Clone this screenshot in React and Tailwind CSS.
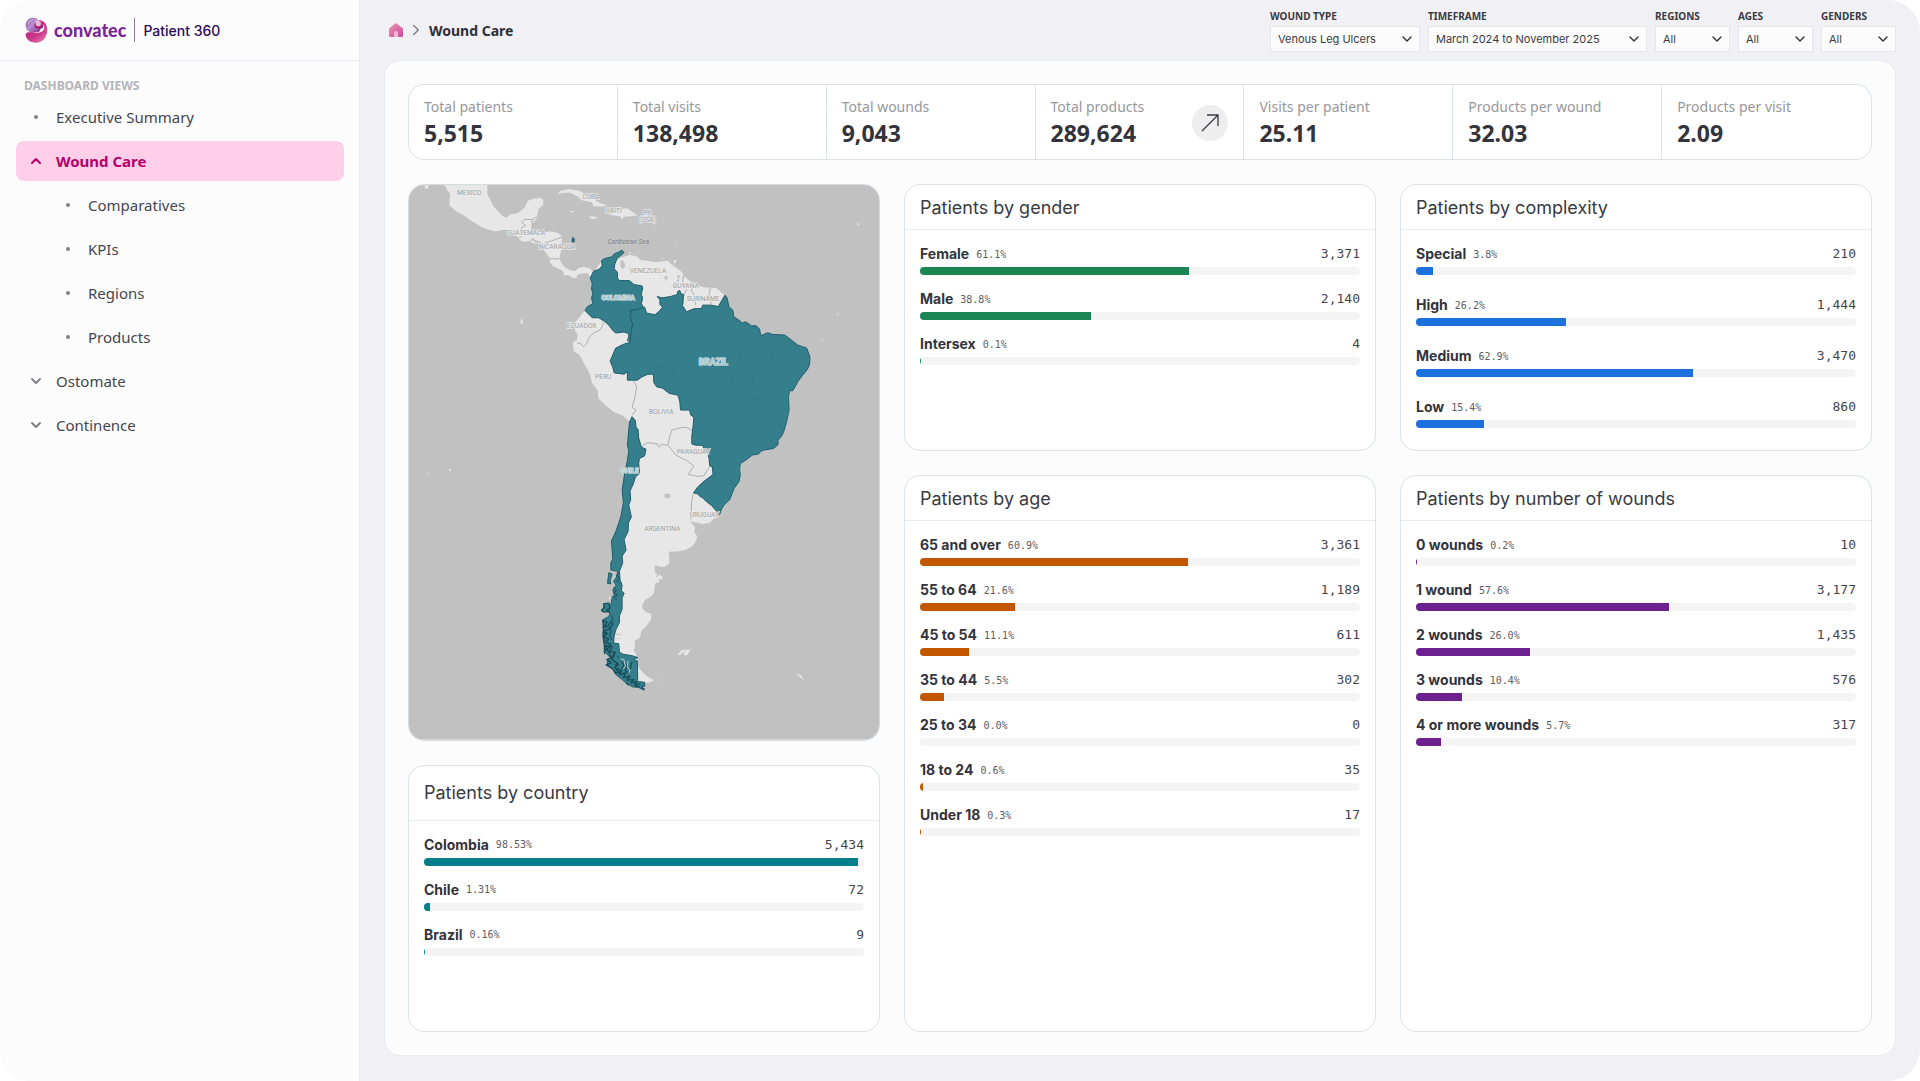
import React, { useState } from 'react';
import { ChevronDown, ChevronRight, ChevronUp } from 'lucide-react';

const navItems = [
  { label: 'Executive Summary', icon: 'dot' },
  { label: 'Wound Care', icon: 'up', active: true },
  { label: 'Comparatives', icon: 'dot', nested: true },
  { label: 'KPIs', icon: 'dot', nested: true },
  { label: 'Regions', icon: 'dot', nested: true },
  { label: 'Products', icon: 'dot', nested: true },
  { label: 'Ostomate', icon: 'down' },
  { label: 'Continence', icon: 'down' },
];

const filters = [
  { id: 'wound-type', label: 'WOUND TYPE', value: 'Venous Leg Ulcers', width: 'w-[150px]' },
  { id: 'timeframe', label: 'TIMEFRAME', value: 'March 2024 to November 2025', width: 'w-[219px]' },
  { id: 'regions', label: 'REGIONS', value: 'All', width: 'w-[75px]' },
  { id: 'ages', label: 'AGES', value: 'All', width: 'w-[75px]' },
  { id: 'genders', label: 'GENDERS', value: 'All', width: 'w-[75px]' },
];

const stats = [
  { label: 'Total patients', value: '5,515' },
  { label: 'Total visits', value: '138,498' },
  { label: 'Total wounds', value: '9,043' },
  { label: 'Total products', value: '289,624', link: true },
  { label: 'Visits per patient', value: '25.11' },
  { label: 'Products per wound', value: '32.03' },
  { label: 'Products per visit', value: '2.09' },
];

const byCountry = [
  { name: 'Colombia', percent: '98.53', count: 5434 },
  { name: 'Chile', percent: '1.31', count: 72 },
  { name: 'Brazil', percent: '0.16', count: 9 },
];

const byGender = [
  { name: 'Female', percent: '61.1', count: 3371 },
  { name: 'Male', percent: '38.8', count: 2140 },
  { name: 'Intersex', percent: '0.1', count: 4 },
];

const byComplexity = [
  { name: 'Special', percent: '3.8', count: 210 },
  { name: 'High', percent: '26.2', bar: '34', count: 1444 },
  { name: 'Medium', percent: '62.9', count: 3470 },
  { name: 'Low', percent: '15.4', count: 860 },
];

const byAge = [
  { name: '65 and over', percent: '60.9', count: 3361 },
  { name: '55 to 64', percent: '21.6', count: 1189 },
  { name: '45 to 54', percent: '11.1', count: 611 },
  { name: '35 to 44', percent: '5.5', count: 302 },
  { name: '25 to 34', percent: '0.0', count: 0 },
  { name: '18 to 24', percent: '0.6', count: 35 },
  { name: 'Under 18', percent: '0.3', count: 17 },
];

const byWounds = [
  { name: '0 wounds', percent: '0.2', count: 10 },
  { name: '1 wound', percent: '57.6', count: 3177 },
  { name: '2 wounds', percent: '26.0', count: 1435 },
  { name: '3 wounds', percent: '10.4', count: 576 },
  { name: '4 or more wounds', percent: '5.7', count: 317 },
];

const Logo = () => (
  <svg className="w-6 h-[26px]" viewBox="0 0 72 78" aria-hidden="true">
    <defs>
      <linearGradient id="logoTop" x1="0" y1="0" x2="1" y2="1">
        <stop offset="0" stopColor="#7d3fa0" />
        <stop offset="0.45" stopColor="#b890cf" />
        <stop offset="1" stopColor="#8a2a86" />
      </linearGradient>
      <linearGradient id="logoSide" x1="0" y1="0" x2="0.6" y2="1">
        <stop offset="0" stopColor="#d779b8" />
        <stop offset="0.5" stopColor="#c0287f" />
        <stop offset="1" stopColor="#dd6aa8" />
      </linearGradient>
      <linearGradient id="logoBase" x1="0" y1="0" x2="1" y2="1">
        <stop offset="0" stopColor="#b3237f" />
        <stop offset="0.55" stopColor="#cf3e8c" />
        <stop offset="1" stopColor="#e58ab8" />
      </linearGradient>
    </defs>
    <path d="M5 26C5 12 15 2 28 2c8 0 13 3 14 9-7 0-11 4-11 10 0 8 7 12 16 12 6 8-2 14-14 13C16 48 5 40 5 26Z" fill="url(#logoTop)" />
    <path d="M47 9c13 2 23 14 23 30 0 12-6 22-16 26-18 0-38-4-49-10 4-9 14-10 26-8 16 2 30-3 30-16 0-6-4-10-8-9-3 6-13 7-17 2 1-6 4-13 11-15Z" fill="url(#logoSide)" />
    <path d="M5 50c8-8 20-2 33-2 11 0 21-2 27-12 8 22-6 41-29 41C18 77 4 67 5 50Z" fill="url(#logoBase)" />
    <path d="M36 14c6 4 9 8 16 7 5 0 8 6 4 11-5 6-17 5-23-1-4-5-3-13 3-17Z" fill="#a3207a" />
    <circle cx="43" cy="20" r="8" fill="#e9b9da" />
    <path d="M10 16C17 5 28 3 35 7 25 9 18 14 13 25Z" fill="#d9c3e6" opacity=".6" />
  </svg>
);

const HomeIcon = () => (
  <svg className="w-[14px] h-[14px]" viewBox="0 0 42 42" aria-hidden="true">
    <defs>
      <linearGradient id="home" x1="0" y1="0" x2="1" y2="1">
        <stop offset="0" stopColor="#ee8fb2" />
        <stop offset="1" stopColor="#c94f97" />
      </linearGradient>
    </defs>
    <path d="M18 2q3-3 6 0l15 12q3 2 3 6v19q0 3-3 3H3q-3 0-3-3V20q0-4 3-6Z" fill="url(#home)" />
    <path d="M15 28q0-3 3-3h6q3 0 3 3v14H15Z" fill="#f3b5d3" />
  </svg>
);

const mapLabels = [
  { text: 'MEXICO', x: -215, y: 42 },
  { text: 'CUBA', x: 152, y: 54 },
  { text: 'HAITI', x: 220, y: 96 },
  { text: 'PR', x: 322, y: 102 },
  { text: '(USA)', x: 322, y: 124 },
  { text: 'GUATEMALA', x: -44, y: 162 },
  { text: 'NICARAGUA', x: 49, y: 206 },
  { text: 'VENEZUELA', x: 324, y: 278 },
  { text: 'GUYANA', x: 438, y: 322 },
  { text: 'SURINAME', x: 490, y: 362 },
  { text: 'ECUADOR', x: 124, y: 444 },
  { text: 'PERU', x: 189, y: 596 },
  { text: 'BOLIVIA', x: 364, y: 703 },
  { text: 'PARAGUAY', x: 461, y: 823 },
  { text: 'URUGUAY', x: 494, y: 1012 },
  { text: 'ARGENTINA', x: 367, y: 1055 },
];

const PatientMap = () => (
  <svg className="block w-full" viewBox="-396 12 1416 1671" role="img" aria-label="Patients by country map">
    <rect x="-396" y="12" width="1416" height="1671" fill="#c1c1c1" />

    {/* Land without patients */}
    <g fill="#e7e7e7">
      <path d="M-290 12-272 40-275 72-255 90-232 103-215 115-180 137-158 146-135 152-110 147-88 150-72 163-65 178-50 183-35 181-20 188-8 190 10 196 10 207 20 222 31 234 28 245 37 256 50 262 68 272 72 284 84 283 98 292 109 292 112 282 130 278 142 278 150 291 158 284 158 272 148 263 130 258 115 262 104 272 88 268 72 258 62 244 57 232 62 210 63 188 66 168 52 156 30 151 5 156-14 150-26 146-25 130-12 112-6 85 8 72 9 57 0 51-18 53-35 58-42 66-46 78-68 97-90 100-102 111-115 105-128 90-142 76-152 55-160 40-160 12Z" />
      <path d="M-350 12h14l-5 12h-5Z" />
      <path d="M50 42 60 30 85 24 120 30 140 45 165 58 182 68 200 72 190 77 160 76 155 64 125 58 110 45 90 35 65 36Z" />
      <path d="M205 102 220 98 240 84 262 82 280 95 293 103 275 106 250 108 246 116 240 106Z" />
      <path d="M145 107 165 107 172 112 155 115ZM91 90h10v4H91ZM310 101h14l-2 5h-12Z" />
      <path d="M160 275 185 240 215 228 245 208 250 216 228 236 240 232 270 222 292 228 300 237 350 245 382 240 398 254 410 262 428 276 432 287 460 308 490 320 530 322 553 343 570 385 582 408 605 425 640 435 660 445 662 465 685 458 735 463 775 493 803 502 812 545 780 600 752 635 748 700 735 750 715 790 665 812 630 830 602 855 600 900 570 960 533 1008 522 1018 508 1030 490 1033 465 1028 450 1024 460 1036 466 1045 463 1056 473 1072 466 1090 455 1103 435 1112 412 1116 390 1116 386 1124 389 1138 388 1152 374 1163 360 1162 345 1157 344 1178 352 1184 348 1195 358 1186 368 1192 366 1200 355 1200 360 1208 346 1212 343 1228 342 1242 333 1252 315 1262 306 1278 309 1290 320 1300 334 1303 333 1322 320 1340 304 1354 302 1368 297 1378 284 1384 285 1400 281 1414 288 1425 291 1440 296 1466 308 1480 322 1493 342 1504 325 1512 292 1510 240 1470 222 1380 230 1290 238 1170 228 1085 250 1010 256 910 268 840 265 722 246 706 220 695 195 675 175 655 172 630 155 608 148 580 132 550 118 525 100 512 98 485 110 478 112 460 104 452 106 425 130 395 135 388 157 370 158 292Z" />
      <path d="M360 1505h4v-3h-4ZM412 1428l14-14 12-3-8 9-8 7ZM432 1422l6-9 14-2 5-3-8 9-6 10-7 3-4-4ZM770 1484l16 6 8 13-12-8ZM402 238h6v10h-6ZM267 214h5v5h-5ZM364 232h5v3h-5ZM955 127h5v6h-5ZM894 400h4v4h-4ZM847 478h4v5h-4ZM-60 415l6 4 1 12-6-1ZM-275 868h5v6h-5ZM-338 879h4v3h-4ZM206 1252l8 4-6 6ZM408 181h3v3h-3Z" />
    </g>

    {/* Lakes */}
    <g fill="#c1c1c1">
      <path d="M242 238 250 240 256 256 248 266 240 256ZM374 942 390 942 392 950 384 957 374 952ZM412 285h8v7h-6l5 8-6 4-4-5h5ZM373 288h12l-6 12h-5l4-8h-6Z" />
      <path d="M222 1364h20v3h-20ZM224 1378h18v2h-18Z" />
    </g>

    {/* Borders */}
    <g fill="none" stroke="#aeaeae" strokeWidth="3" strokeLinejoin="round">
      <path d="M-68 178-55 160-58 142-44 134-57 125-48 116-25 116-25 146-12 150M-25 116-12 108M-8 190-24 176-32 182M10 188 35 180 66 168M31 234 57 235M-26 172-14 180 10 190" />
      <path d="M430 285 428 315 440 328 430 345 432 372M458 312 455 330 464 345 468 375M512 322 508 345 515 374" />
      <path d="M185 415 190 430 180 448 160 458 148 470 138 492 130 500 122 490 110 488M280 603 290 618 284 655 276 682 288 690 275 706M305 800 322 788 352 792 358 802 366 793 384 796 390 768 396 750 420 744 440 742 458 752M384 796 408 826 440 842 462 858 446 884 475 890 492 888 510 860M460 942 455 970 453 1020" />
    </g>

    {/* Countries with patients */}
    <g fill="#357f8c" stroke="#1e5d6a" strokeWidth="3" strokeLinejoin="round">
      <path d="M97 170 102 174 102 182 98 186 95 180Z" />
      <path d="M245 208 252 216 232 232 224 250 222 264 232 275 232 292 238 300 268 300 282 312 306 316 308 322 304 342 308 352 304 370 314 386 290 388 272 390 274 402 270 408 278 432 274 450 274 486 262 480 266 470 266 460 252 455 226 458 216 448 206 434 190 420 175 412 156 412 134 390 142 378 158 370 154 352 158 340 154 325 156 308 150 292 160 272 176 266 186 256 184 240 192 234 216 228 222 220 236 214Z" />
      <path d="M314 380 320 398 345 403 358 392 368 380 360 372 360 358 352 348 366 352 392 348 412 342 414 332 420 330 424 340 432 342 430 352 428 375 440 394 462 385 486 384 488 374 512 374 536 378 546 360 556 344 562 352 568 378 580 390 582 408 602 422 608 428 618 424 636 436 650 436 660 446 664 466 684 457 700 462 736 464 760 482 775 494 802 503 812 530 811 552 804 568 790 585 776 604 760 632 750 632 748 652 749 690 742 724 734 752 728 766 716 782 716 794 702 806 676 810 664 814 658 822 638 826 620 840 602 852 600 870 602 886 598 906 584 926 570 960 556 974 546 988 540 1004 532 1006 530 994 516 978 498 964 488 954 480 950 474 942 461 940 472 924 488 908 504 896 520 884 518 862 510 858 508 836 504 818 496 812 488 796 468 796 456 792 456 768 460 738 462 712 452 704 450 690 422 690 420 666 416 650 410 644 388 640 368 624 350 620 342 608 340 582 324 582 306 590 292 600 262 600 262 575 252 582 222 578 218 562 210 542 218 524 226 504 250 492 270 486 274 450 278 432 270 408 274 402 272 390 290 388Z" />
      <path d="M276 710 286 722 288 742 294 748 296 774 304 802 318 808 314 828 298 836 296 852 299 880 286 892 280 912 270 934 272 960 266 976 274 1012 265 1030 264 1056 252 1080 258 1112 246 1130 248 1150 238 1176 240 1202 246 1218 244 1234 252 1242 246 1256 246 1290 238 1310 238 1330 228 1350 222 1370 220 1392 236 1394 238 1420 250 1426 276 1430 294 1436 280 1440 292 1446 293 1508 314 1510 314 1522 304 1524 312 1534 296 1526 278 1524 262 1516 246 1502 226 1486 214 1462 200 1452 210 1436 196 1420 206 1404 190 1390 188 1360 196 1340 188 1322 206 1312 210 1300 190 1290 194 1276 212 1278 216 1254 222 1246 218 1232 228 1218 220 1206 228 1196 234 1176 212 1172 212 1150 218 1138 214 1084 228 1054 242 1012 250 968 246 932 254 880 262 842 266 812 262 796 268 726Z" />
      <path d="M206 1180 216 1184 210 1202 212 1214 202 1212Z" />
    </g>

    {/* Chilean fjords and islands */}
    <g fill="#357f8c" stroke="#164c57" strokeWidth="4" strokeLinejoin="round">
      <path d="M184 1294 192 1284 190 1274 206 1272 210 1286 200 1292 208 1298 190 1298ZM188 1324 200 1330 192 1344 204 1340 214 1326 218 1334 208 1350 190 1356 202 1364 188 1372 206 1380 196 1390 212 1396 204 1408 192 1416 194 1424ZM196 1400 216 1404 208 1418 226 1420 218 1432 234 1434 222 1446 240 1446 226 1458 242 1464 228 1474 240 1480 226 1482 218 1470 198 1458 214 1452 200 1442 214 1436Z" />
      <path d="M224 1424 216 1442 236 1456 224 1466 244 1476 238 1488 256 1482 250 1496 270 1492 260 1504 282 1502 272 1512 290 1508 284 1518 300 1514M246 1448 252 1462 244 1470M262 1452 256 1476 268 1484M276 1448 270 1472M258 1512 266 1518M284 1520 300 1524M306 1526 314 1532" />
      <path d="M220 1226 230 1234 222 1240 232 1248 222 1254 230 1262M238 1178 230 1186 238 1196 230 1204 238 1212M214 1308 220 1324M206 1342 214 1356 208 1370 216 1382" fill="none" strokeWidth="3" />
    </g>
    <path d="M252 1446 256 1460 250 1470M264 1446 262 1464 270 1474 266 1484M242 1440 254 1444" fill="none" stroke="#c9d6d8" strokeWidth="3" />

    {/* Brazilian state lines */}
    <path
      d="M380 405 392 420 405 440M434 395 448 418M340 560 400 562 404 612 450 610M580 478 592 495 600 530 596 560 575 590 572 628 620 632 640 610 638 580 660 560 700 570 745 560M660 468 636 500 605 512M700 490 695 530 720 545M720 545 755 535 780 520M636 660 680 652 720 680M636 660 640 700 600 712 560 702 532 720M620 710 625 745 600 770 555 765 545 790 505 812M560 800 590 815 600 830M545 892 570 900 590 920M640 700 700 720 730 740"
      fill="none"
      stroke="#2f7885"
      strokeWidth="3"
      strokeDasharray="14 5"
    />

    <g className="font-['Roboto',sans-serif]" fontSize="20" textAnchor="middle" fill="#9c9c9c" stroke="#ececec" strokeWidth="4" paintOrder="stroke">
      {mapLabels.map((label) => (
        <text key={label.text} x={label.x} y={label.y}>{label.text}</text>
      ))}
      <text x="265" y="191" fill="#888888" stroke="#c8c8c8" fontStyle="italic" fontWeight="500">Caribbean Sea</text>
      <g fill="#a9c6cb" stroke="#e3ecee" strokeWidth="3" fontWeight="700">
        <text x="234" y="358">COLOMBIA</text>
        <text x="269" y="879">CHILE</text>
        <text x="521" y="555" fontSize="26">BRAZIL</text>
      </g>
    </g>
  </svg>
);

const BarRow = ({ item, color }) => (
  <li>
    <div className="flex items-center h-[19px] mb-1">
      <span className="text-[14px] font-bold text-[#33333b]">{item.name}</span>
      <span className="ml-[7px] pt-px font-['DejaVu_Sans_Mono',monospace] text-[10px] text-[#5c5c64]">{item.percent}%</span>
      <span className="ml-auto pt-px font-['DejaVu_Sans_Mono',monospace] text-[13px] text-[#45454d]">{item.count.toLocaleString('en-US')}</span>
    </div>
    <div className="h-2 rounded-full bg-[#f4f4f4] overflow-hidden">
      <div className={`h-full ${color}`} style={{ width: `${item.bar || item.percent}%` }} />
    </div>
  </li>
);

const ChartCard = ({ title, items, color, className = '', headerClass = 'h-[45px]', listClass = 'gap-[14px]' }) => (
  <section className={`rounded-2xl border border-[#d9e3e8] bg-white font-['Inter',sans-serif] ${className}`}>
    <header className={`flex items-center px-[15px] border-b border-[#e4ebee] ${headerClass}`}>
      <h2 className="text-[18px] text-[#3a3a42]">{title}</h2>
    </header>
    <ul className={`flex flex-col px-[15px] py-[14px] ${listClass}`}>
      {items.map((item) => (
        <BarRow key={item.name} item={item} color={color} />
      ))}
    </ul>
  </section>
);

const NavIcon = ({ type }) => {
  if (type === 'up') return <ChevronUp className="w-4 h-4" strokeWidth={3} />;
  if (type === 'down') return <ChevronDown className="w-4 h-4 text-[#808086]" strokeWidth={3} />;
  return <span className="w-1 h-1 rounded-full bg-[#808086]" />;
};

const App = () => {
  const [values, setValues] = useState({});

  return (
    <div className="min-h-screen flex rounded-[32px] overflow-hidden bg-[#f0f0f5] font-['Noto_Sans',sans-serif]">
      {/* Sidebar */}
      <aside className="w-[360px] shrink-0 bg-[#fcfcfd] border-r border-[#e4ecef]">
        <div className="h-[61px] px-6 flex items-center border-b border-[#e4ecef] font-['Inter',sans-serif]">
          <Logo />
          <span className="ml-[6px] text-[18px] leading-6 font-black text-[#7a2596] font-['Lato',sans-serif]">convatec</span>
          <span className="ml-2 w-px h-6 bg-[#9179a8]" />
          <span className="ml-2 text-[14px] font-medium text-[#2d0a5c]">Patient 360</span>
        </div>
        <nav className="pl-4 pr-[15px] pt-[15px]">
          <p className="px-2 h-[21px] leading-5 text-[12px] font-bold text-[#b4b4b8]">DASHBOARD VIEWS</p>
          <ul className="flex flex-col gap-1">
            {navItems.map((item) => (
              <li key={item.label}>
                <a
                  href="#"
                  aria-current={item.active ? 'page' : undefined}
                  className={`flex items-center h-10 rounded-lg text-[15px] ${item.nested ? 'pl-11' : 'pl-3'} ${
                    item.active ? 'bg-[#ffcee9] text-[#b30069] font-bold' : 'text-[#45454d]'
                  }`}
                >
                  <span className="w-4 h-4 mr-3 flex items-center justify-center">
                    <NavIcon type={item.icon} />
                  </span>
                  {item.label}
                </a>
              </li>
            ))}
          </ul>
        </nav>
      </aside>

      {/* Main content */}
      <main className="flex-1 min-w-0 flex flex-col px-6 pb-[25px]">
        <div className="h-[60px] flex items-center">
          <div className="flex items-center pl-[5px]">
            <a href="#" aria-label="Home"><HomeIcon /></a>
            <ChevronRight className="ml-1 w-[18px] h-[18px] text-[#808086]" />
            <h1 className="ml-1 text-[14px] font-bold text-[#2f2f37]">Wound Care</h1>
          </div>
          <div className="ml-auto flex gap-2">
            {filters.map((filter) => (
              <div key={filter.id} className={filter.width}>
                <label htmlFor={filter.id} className="block h-[18px] leading-4 text-[10px] font-bold text-[#3a3a42]">{filter.label}</label>
                <div className="relative">
                  <select
                    id={filter.id}
                    value={values[filter.id] || filter.value}
                    onChange={(e) => setValues({ ...values, [filter.id]: e.target.value })}
                    className="block w-full h-[26px] pl-[7px] appearance-none border border-[#e6e6ea] bg-[#fcfcfd] font-['Inter',sans-serif] text-[11px] text-[#3a3a42]"
                  >
                    <option>{filter.value}</option>
                  </select>
                  <ChevronDown className="absolute right-[5px] top-[5px] w-4 h-4 text-[#2f2f37] pointer-events-none" />
                </div>
              </div>
            ))}
          </div>
        </div>

        <div className="flex-1 flex flex-col gap-6 p-[23px] rounded-2xl border border-[#e6ebf0] bg-[#fcfcfd]">
          <dl className="grid grid-cols-7 rounded-2xl border border-[#d9e3e8] bg-white divide-x divide-[#d9e3e8]">
            {stats.map((stat) => (
              <div key={stat.label} className="h-[74px] px-[15px] pt-0.5 flex items-center justify-between">
                <div>
                  <dt className="text-[14px] leading-5 text-[#97979b]">{stat.label}</dt>
                  <dd className="text-[23px] leading-8 font-bold text-[#33333b]">{stat.value}</dd>
                </div>
                {stat.link && (
                  <button type="button" aria-label="Open total products" className="w-9 h-9 rounded-full bg-[#eeeeee] flex items-center justify-center">
                    <svg className="w-[18px] h-[18px]" viewBox="0 0 18 18" fill="none" stroke="#3a3a42" strokeWidth="1.3" aria-hidden="true">
                      <path d="M1 17 17 1M6 1h11v11" />
                    </svg>
                  </button>
                )}
              </div>
            ))}
          </dl>

          <div className="flex-1 grid grid-cols-3 gap-6">
            <div className="flex flex-col gap-6">
              <div className="rounded-2xl border border-[#d3dee3] overflow-hidden">
                <PatientMap />
              </div>
              <ChartCard title="Patients by country" items={byCountry} color="bg-[#027f8b]" className="flex-1" headerClass="h-[55px]" />
            </div>
            <div className="flex flex-col gap-6">
              <ChartCard title="Patients by gender" items={byGender} color="bg-[#1b8554]" className="h-[267px]" />
              <ChartCard title="Patients by age" items={byAge} color="bg-[#c25700]" className="flex-1" />
            </div>
            <div className="flex flex-col gap-6">
              <ChartCard title="Patients by complexity" items={byComplexity} color="bg-[#1c71dc]" className="h-[267px]" listClass="gap-5" />
              <ChartCard title="Patients by number of wounds" items={byWounds} color="bg-[#6d2191]" className="flex-1" />
            </div>
          </div>
        </div>
      </main>
    </div>
  );
};

export default App;
